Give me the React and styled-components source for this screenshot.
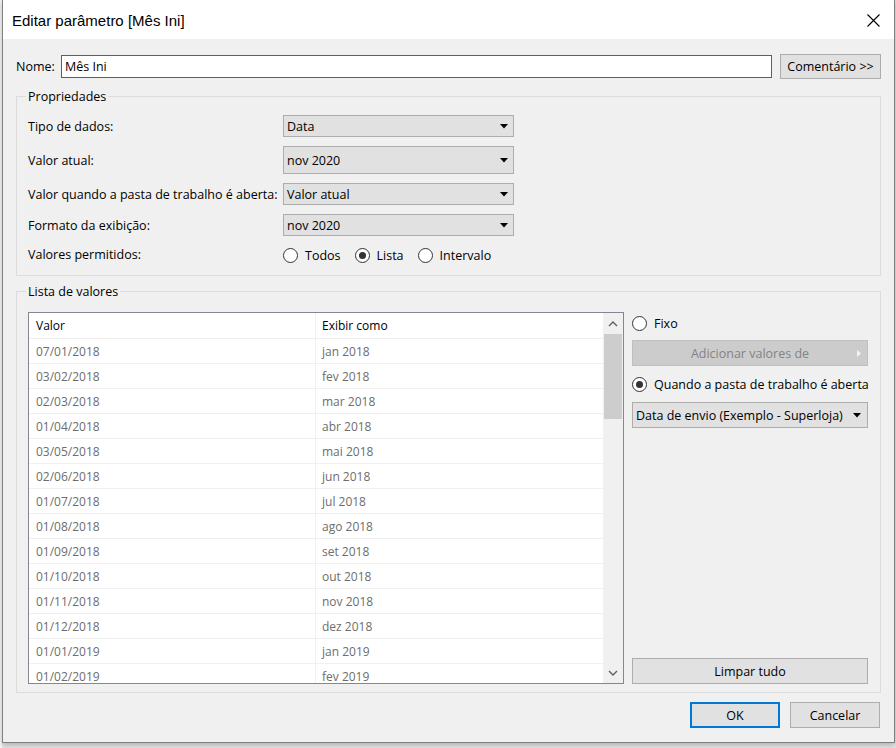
import React from 'react';
import styled, { createGlobalStyle } from 'styled-components';

const GlobalStyle = createGlobalStyle`
  html, body {
    margin: 0;
    padding: 0;
    background: #e6e6e6;
  }
  body {
    font-family: "Open Sans", "Liberation Sans", Arial, sans-serif;
    font-size: 12.5px;
    color: #000;
  }
`;

const rows = [
  ['07/01/2018', 'jan 2018'],
  ['03/02/2018', 'fev 2018'],
  ['02/03/2018', 'mar 2018'],
  ['01/04/2018', 'abr 2018'],
  ['03/05/2018', 'mai 2018'],
  ['02/06/2018', 'jun 2018'],
  ['01/07/2018', 'jul 2018'],
  ['01/08/2018', 'ago 2018'],
  ['01/09/2018', 'set 2018'],
  ['01/10/2018', 'out 2018'],
  ['01/11/2018', 'nov 2018'],
  ['01/12/2018', 'dez 2018'],
  ['01/01/2019', 'jan 2019'],
  ['01/02/2019', 'fev 2019'],
];

const Caret = () => (
  <svg width="8" height="5" viewBox="0 0 8 5">
    <path d="M0 0 H8 L4 4.5 Z" fill="#000" />
  </svg>
);

const Radio = ({ checked, children }) => (
  <RadioLabel>
    <RadioCircle checked={checked} />
    {children}
  </RadioLabel>
);

const App = () => {
  return (
    <>
      <GlobalStyle />
      <Backdrop>
        <Dialog>
          <TitleBar>
            <Title>Editar parâmetro [Mês Ini]</Title>
            <CloseButton>
              <svg width="13" height="13" viewBox="0 0 13 13">
                <path d="M0.5 0.5 L12.5 12.5 M12.5 0.5 L0.5 12.5" stroke="#000" strokeWidth="1.1" />
              </svg>
            </CloseButton>
          </TitleBar>

          <Body>
            <NameRow>
              <NameLabel>Nome:</NameLabel>
              <NameInput>Mês Ini</NameInput>
              <Button width={101} height={25}>Comentário &gt;&gt;</Button>
            </NameRow>

            <Group>
              <Legend>Propriedades</Legend>
              <PropGrid>
                <PropLabel>Tipo de dados:</PropLabel>
                <Select width={231} height={22}>
                  <span>Data</span>
                  <Caret />
                </Select>

                <PropLabel>Valor atual:</PropLabel>
                <Select width={231} height={28}>
                  <span>nov 2020</span>
                  <Caret />
                </Select>

                <PropLabel>Valor quando a pasta de trabalho é aberta:</PropLabel>
                <Select width={231} height={22}>
                  <span>Valor atual</span>
                  <Caret />
                </Select>

                <PropLabel>Formato da exibição:</PropLabel>
                <Select width={231} height={22}>
                  <span>nov 2020</span>
                  <Caret />
                </Select>

                <PropLabel>Valores permitidos:</PropLabel>
                <RadioRow>
                  <Radio>Todos</Radio>
                  <Radio checked>Lista</Radio>
                  <Radio>Intervalo</Radio>
                </RadioRow>
              </PropGrid>
            </Group>

            <Group list>
              <Legend>Lista de valores</Legend>
              <ListLayout>
                <ListBox>
                  <ListArea>
                    <HeaderRow>
                      <Cell header first>Valor</Cell>
                      <Cell header>Exibir como</Cell>
                    </HeaderRow>
                    {rows.map(([v, d]) => (
                      <DataRow key={v}>
                        <Cell first>{v}</Cell>
                        <Cell>{d}</Cell>
                      </DataRow>
                    ))}
                  </ListArea>
                  <ScrollBar>
                    <ScrollArrow>
                      <svg width="10" height="6" viewBox="0 0 10 6">
                        <path d="M1 5 L5 1 L9 5" stroke="#606060" strokeWidth="1.4" fill="none" />
                      </svg>
                    </ScrollArrow>
                    <Thumb />
                    <ScrollSpacer />
                    <ScrollArrow>
                      <svg width="10" height="6" viewBox="0 0 10 6">
                        <path d="M1 1 L5 5 L9 1" stroke="#606060" strokeWidth="1.4" fill="none" />
                      </svg>
                    </ScrollArrow>
                  </ScrollBar>
                </ListBox>

                <SidePanel>
                  <SideRadio top={3}>
                    <Radio>Fixo</Radio>
                  </SideRadio>
                  <DisabledButton>
                    <span>Adicionar valores de</span>
                    <SubArrow>
                      <svg width="4" height="7" viewBox="0 0 4 7">
                        <path d="M0 0 L4 3.5 L0 7 Z" fill="#f4f4f4" />
                      </svg>
                    </SubArrow>
                  </DisabledButton>
                  <SideRadio top={10}>
                    <Radio checked>Quando a pasta de trabalho é aberta</Radio>
                  </SideRadio>
                  <SideSelect>
                    <span>Data de envio (Exemplo - Superloja)</span>
                    <Caret />
                  </SideSelect>
                  <SideSpacer />
                  <Button width={236} height={26}>Limpar tudo</Button>
                </SidePanel>
              </ListLayout>
            </Group>

            <Footer>
              <Button width={90} height={26} primary>OK</Button>
              <Button width={90} height={26}>Cancelar</Button>
            </Footer>
          </Body>
        </Dialog>
      </Backdrop>
    </>
  );
};

const Backdrop = styled.div`
  width: 896px;
  height: 748px;
  padding-left: 2px;
  box-sizing: border-box;
  background: linear-gradient(to right, #f7f7f7 0, #f7f7f7 2px, #e6e6e6 2px);
  overflow: hidden;
`;

const Dialog = styled.div`
  width: 893px;
  height: 744px;
  box-sizing: border-box;
  margin-top: -1px;
  border: 1px solid #7f7f7f;
  background: #f0f0f0;
  display: flex;
  flex-direction: column;
  box-shadow: 0 2px 6px rgba(0, 0, 0, 0.25);
`;

const TitleBar = styled.div`
  height: 38px;
  flex-shrink: 0;
  background: #fff;
  display: flex;
  align-items: center;
  justify-content: space-between;
  padding: 1px 14px 0 9px;
`;

const Title = styled.div`
  font-family: "Liberation Sans", Arial, sans-serif;
  font-size: 15px;
  color: #000;
`;

const CloseButton = styled.div`
  width: 13px;
  height: 13px;
  display: flex;
`;

const Body = styled.div`
  flex: 1;
  display: flex;
  flex-direction: column;
  padding: 15px 13px 0 13px;
`;

const NameRow = styled.div`
  display: flex;
  align-items: center;
  height: 25px;
`;

const NameLabel = styled.div`
  width: 45px;
`;

const NameInput = styled.div`
  flex: 1;
  height: 23px;
  box-sizing: border-box;
  border: 1px solid #0078d7;
  background: #fff;
  display: flex;
  align-items: center;
  padding-left: 3px;
  margin-right: 8px;
`;

const Button = styled.div`
  width: ${(p) => p.width}px;
  height: ${(p) => p.height}px;
  box-sizing: border-box;
  flex-shrink: 0;
  background: #e1e1e1;
  border: ${(p) => (p.primary ? '2px solid #0078d7' : '1px solid #adadad')};
  display: flex;
  align-items: center;
  justify-content: center;
  color: #000;
`;

const Group = styled.fieldset`
  margin: ${(p) => (p.list ? '8px 0 0 0' : '10px 0 0 0')};
  padding: ${(p) => (p.list ? '3px 11px 8px 11px' : '11px 11px 11px 11px')};
  border: 1px solid #dcdcdc;
  min-width: 0;
`;

const Legend = styled.legend`
  padding: 0 2px;
  margin-left: -2px;
  line-height: 15px;
`;

const PropGrid = styled.div`
  display: grid;
  grid-template-columns: 255px auto;
  row-gap: 9px;
  align-items: center;
  justify-items: start;
`;

const PropLabel = styled.div`
  white-space: nowrap;
`;

const Select = styled.div`
  width: ${(p) => p.width}px;
  height: ${(p) => p.height}px;
  box-sizing: border-box;
  flex-shrink: 0;
  background: #e1e1e1;
  border: 1px solid #adadad;
  display: flex;
  align-items: center;
  justify-content: space-between;
  padding: 0 5px 0 3px;
  white-space: nowrap;
`;

const SideSelect = styled(Select).attrs({ width: 236, height: 26 })`
  margin-top: 10px;
  padding-right: 6px;
`;

const RadioRow = styled.div`
  display: flex;
  align-items: center;
  gap: 14px;
  margin-top: 2px;
`;

const RadioLabel = styled.div`
  display: flex;
  align-items: center;
  gap: 7px;
  white-space: nowrap;
`;

const RadioCircle = styled.span`
  width: 15px;
  height: 15px;
  box-sizing: border-box;
  border-radius: 50%;
  border: 1px solid #333;
  background: #fff;
  display: inline-flex;
  align-items: center;
  justify-content: center;
  flex-shrink: 0;

  &::after {
    content: '';
    width: 7px;
    height: 7px;
    border-radius: 50%;
    background: ${(p) => (p.checked ? '#333' : 'transparent')};
  }
`;

const ListLayout = styled.div`
  display: flex;
  gap: 8px;
  margin-top: 10px;
`;

const ListBox = styled.div`
  width: 596px;
  height: 372px;
  box-sizing: border-box;
  border: 1px solid #828790;
  background: #fff;
  display: flex;
  overflow: hidden;
  font-size: 12px;
`;

const ListArea = styled.div`
  flex: 1;
  overflow: hidden;
`;

const HeaderRow = styled.div`
  display: grid;
  grid-template-columns: 287px 1fr;
  height: ${(p) => (p.data ? 25 : 26)}px;
  border-bottom: 1px solid #f0f0f0;
  box-sizing: border-box;
`;

const DataRow = styled(HeaderRow).attrs({ data: true })`
  color: #6d6d6d;
`;

const Cell = styled.div`
  display: flex;
  align-items: center;
  padding-left: ${(p) => (p.first ? '7px' : '6px')};
  border-right: ${(p) => (p.first ? '1px solid #f0f0f0' : 'none')};
  color: ${(p) => (p.header ? '#000' : 'inherit')};
`;

const ScrollBar = styled.div`
  width: 20px;
  flex-shrink: 0;
  background: #f0f0f0;
  display: flex;
  flex-direction: column;
  align-items: center;
`;

const ScrollArrow = styled.div`
  height: 21px;
  width: 100%;
  display: flex;
  align-items: center;
  justify-content: center;
`;

const Thumb = styled.div`
  width: 18px;
  height: 85px;
  background: #cdcdcd;
`;

const ScrollSpacer = styled.div`
  flex: 1;
`;

const SidePanel = styled.div`
  width: 236px;
  display: flex;
  flex-direction: column;
`;

const SideRadio = styled.div`
  height: 16px;
  display: flex;
  align-items: center;
  margin-top: ${(p) => p.top}px;
`;

const DisabledButton = styled.div`
  height: 26px;
  margin-top: 9px;
  box-sizing: border-box;
  border: 1px solid #bfbfbf;
  background: #cccccc;
  color: #838383;
  display: flex;
  align-items: center;
  justify-content: center;
  position: relative;
`;

const SubArrow = styled.span`
  position: absolute;
  right: 6px;
  top: 9px;
  display: flex;
`;

const SideSpacer = styled.div`
  flex: 1;
`;

const Footer = styled.div`
  display: flex;
  justify-content: flex-end;
  gap: 10px;
  padding-top: 9px;
  padding-right: 1px;
`;

export default App;
